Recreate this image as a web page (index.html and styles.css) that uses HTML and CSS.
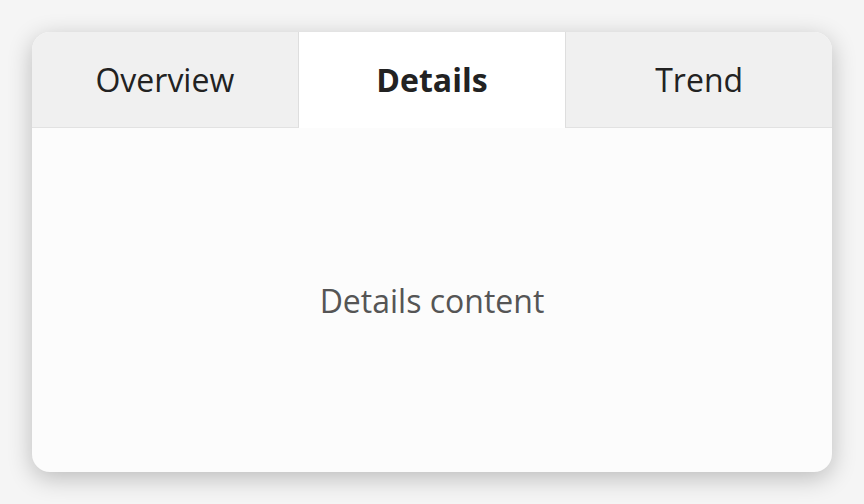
FILE: index.html
```html
<!DOCTYPE html>
<html>
<head>
<meta charset="utf-8">
<link rel="stylesheet" href="styles.css">
</head>
<body>
<div class="card">
  <div class="tabs">
    <div class="tab">Overview</div>
    <div class="tab active">Details</div>
    <div class="tab">Trend</div>
  </div>
  <div class="content">Details content</div>
</div>
</body>
</html>
```
FILE: styles.css
```css
html, body {
  margin: 0;
  padding: 0;
}
body {
  background: #f5f5f5;
  font-family: "Open Sans", "Noto Sans", sans-serif;
  padding: 32px;
  box-sizing: border-box;
  width: 864px;
  height: 504px;
}
.card {
  width: 800px;
  height: 440px;
  background: #fcfcfc;
  border-radius: 18px;
  overflow: hidden;
  box-shadow: 0 6px 24px rgba(0, 0, 0, 0.24);
  display: flex;
  flex-direction: column;
}
.tabs {
  display: grid;
  grid-template-columns: 1fr 1fr 1fr;
  height: 96px;
  flex: none;
}
.tab {
  background: #f0f0f0;
  color: #222;
  font-size: 32px;
  display: flex;
  align-items: center;
  justify-content: center;
  border-bottom: 1px solid #e2e2e2;
  box-sizing: border-box;
}
.tab:first-child {
  border-right: 1px solid #dedede;
}
.tab:last-child {
  border-left: 1px solid #dedede;
}
.tab.active {
  background: #ffffff;
  font-weight: 700;
  border-bottom-color: transparent;
}
.content {
  flex: 1;
  display: flex;
  align-items: center;
  justify-content: center;
  color: #555;
  font-size: 32px;
}
```
